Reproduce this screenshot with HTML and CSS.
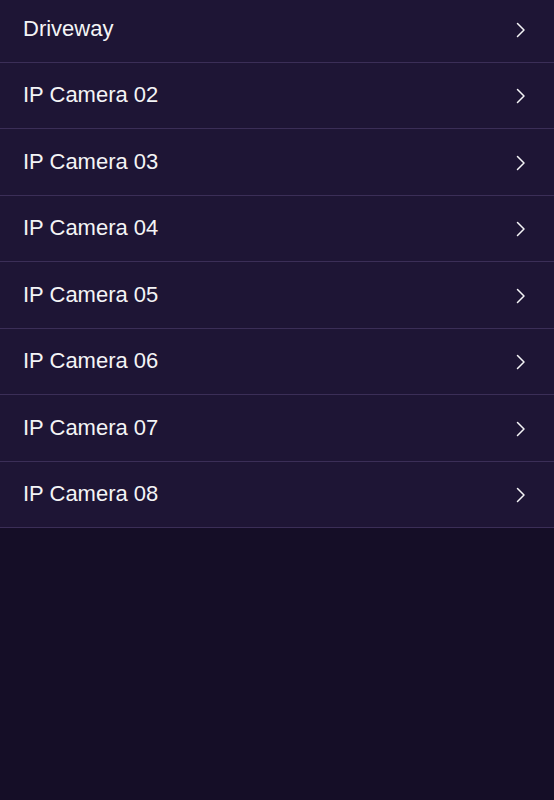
FILE: index.html
```html
<!DOCTYPE html>
<html>
<head>
<meta charset="utf-8">
<link rel="stylesheet" href="styles.css">
</head>
<body>
<ul class="list">
  <li class="row"><span class="label">Driveway</span><svg class="chev" viewBox="0 0 10 16"><path d="M1.5 1.5 L8 8 L1.5 14.5" /></svg></li>
  <li class="row"><span class="label">IP Camera 02</span><svg class="chev" viewBox="0 0 10 16"><path d="M1.5 1.5 L8 8 L1.5 14.5" /></svg></li>
  <li class="row"><span class="label">IP Camera 03</span><svg class="chev" viewBox="0 0 10 16"><path d="M1.5 1.5 L8 8 L1.5 14.5" /></svg></li>
  <li class="row"><span class="label">IP Camera 04</span><svg class="chev" viewBox="0 0 10 16"><path d="M1.5 1.5 L8 8 L1.5 14.5" /></svg></li>
  <li class="row"><span class="label">IP Camera 05</span><svg class="chev" viewBox="0 0 10 16"><path d="M1.5 1.5 L8 8 L1.5 14.5" /></svg></li>
  <li class="row"><span class="label">IP Camera 06</span><svg class="chev" viewBox="0 0 10 16"><path d="M1.5 1.5 L8 8 L1.5 14.5" /></svg></li>
  <li class="row"><span class="label">IP Camera 07</span><svg class="chev" viewBox="0 0 10 16"><path d="M1.5 1.5 L8 8 L1.5 14.5" /></svg></li>
  <li class="row"><span class="label">IP Camera 08</span><svg class="chev" viewBox="0 0 10 16"><path d="M1.5 1.5 L8 8 L1.5 14.5" /></svg></li>
</ul>
</body>
</html>
```
FILE: styles.css
```css
html, body {
  margin: 0;
  padding: 0;
  height: 100%;
}
body {
  background: #150e27;
  font-family: "Liberation Sans", Arial, sans-serif;
  overflow: hidden;
}
.list {
  list-style: none;
  margin: -4px 0 0 0;
  padding: 0;
  background: #1e1535;
}
.row {
  display: flex;
  align-items: center;
  justify-content: space-between;
  height: 65.5px;
  border-bottom: 1px solid #3b2e57;
  padding: 0 28px 0 23px;
}
.label {
  color: #f4f4f6;
  font-size: 22px;
  line-height: 1;
}
.chev {
  width: 10px;
  height: 16px;
  margin-top: 2px;
  fill: none;
  stroke: #f4f4f6;
  stroke-width: 1.5;
  stroke-linecap: round;
  stroke-linejoin: round;
}
```
